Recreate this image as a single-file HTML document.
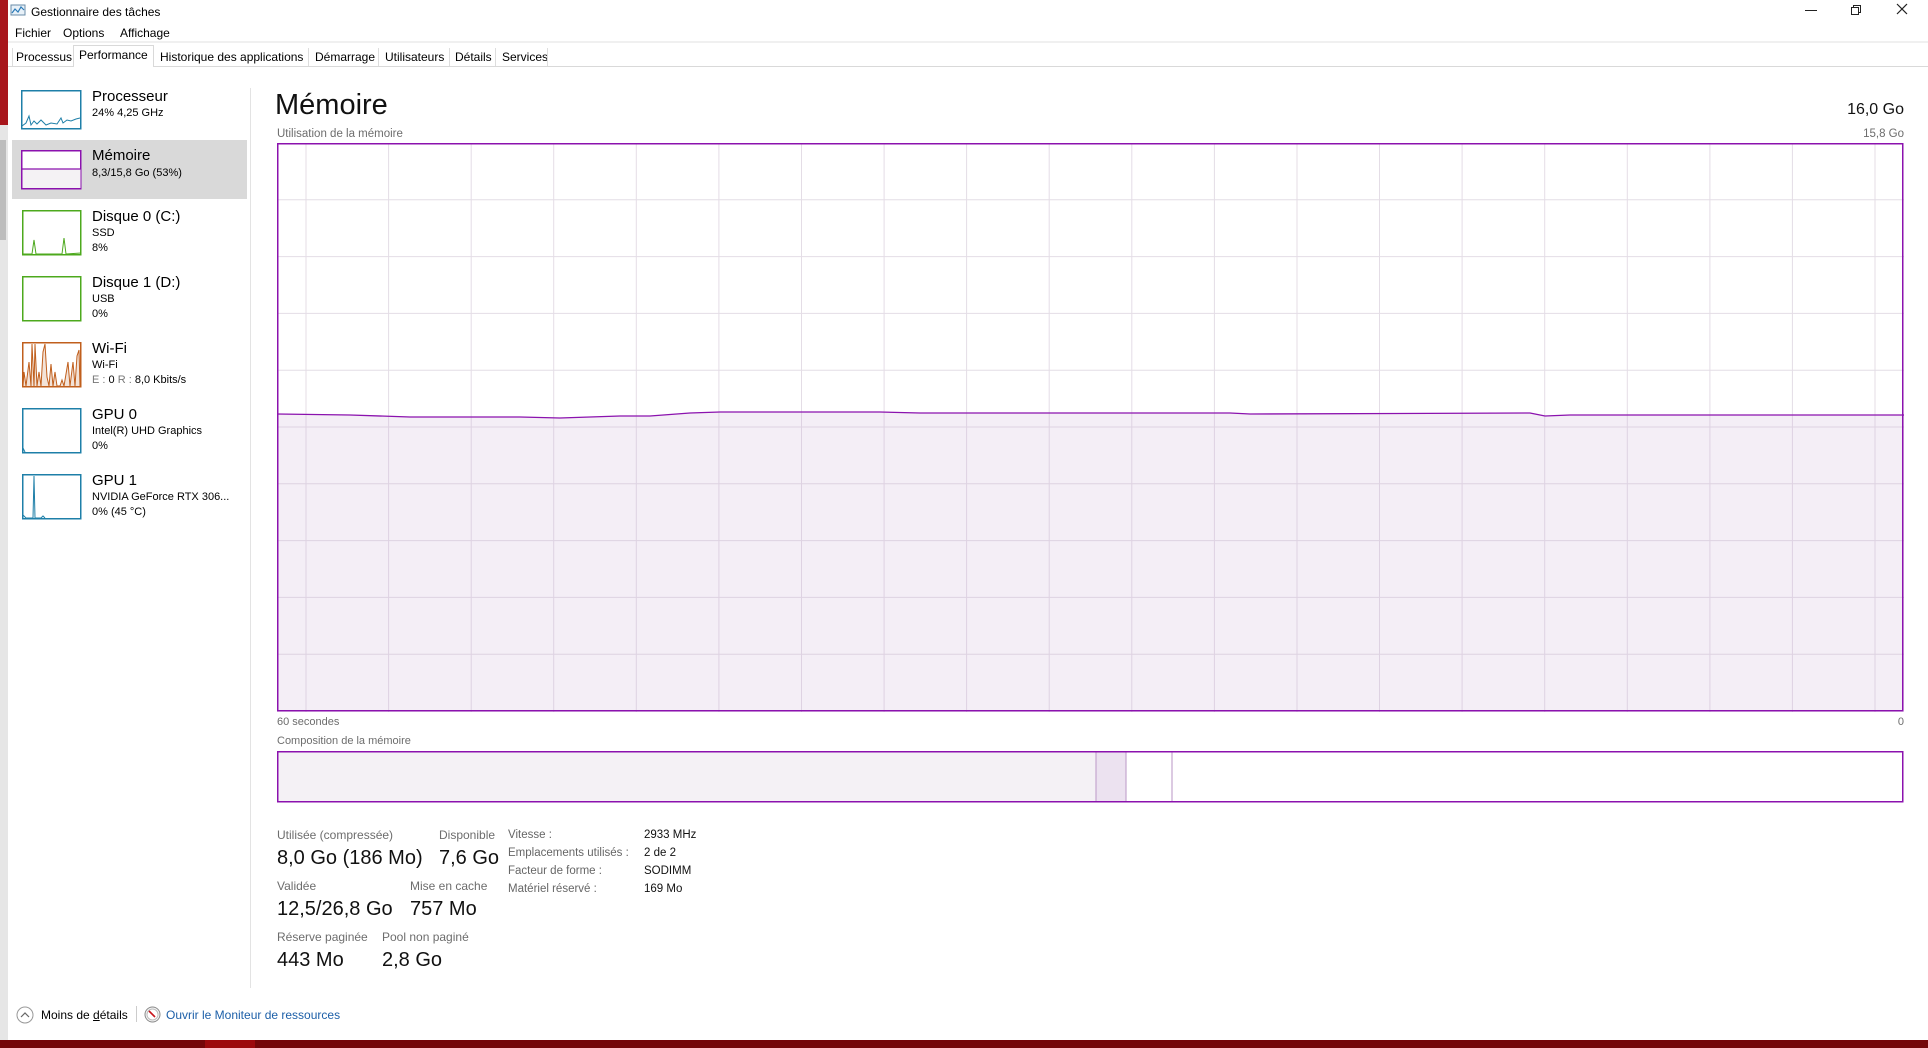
<!DOCTYPE html>
<html><head><meta charset="utf-8"><style>
*{margin:0;padding:0;box-sizing:border-box}
body{width:1928px;height:1048px;overflow:hidden;background:#fff;font-family:"Liberation Sans","DejaVu Sans",sans-serif;color:#000;position:relative}
.a{position:absolute;white-space:nowrap}
.t{font-size:15px}
.s{font-size:11px}
.tab{font-size:12px;top:50px}
.sep{top:48px;height:18px;width:1px;background:#ddd}
.lbl{font-size:12px;color:#6d6d6d}
.val{font-size:20px;color:#111}
.r{font-size:11.5px;color:#666}
.rv{font-size:11.5px;color:#111}
</style></head><body>
<div class="a" style="left:0;top:0;width:8px;height:125px;background:#a8161c"></div>
<div class="a" style="left:0;top:125px;width:8px;height:915px;background:#e6e6e6"></div>
<div class="a" style="left:0;top:140px;width:6px;height:100px;background:#bdbdbd"></div>
<div class="a" style="left:0;top:1040px;width:1928px;height:8px;background:#74070a"></div>
<div class="a" style="left:205px;top:1040px;width:50px;height:8px;background:#9c0a0e"></div>
<svg class="a" style="left:10px;top:4px" width="16" height="14"><rect x="1" y="1" width="14" height="10" fill="#e8f1f8" stroke="#6a8ca8"/><polyline points="2,9 5,5 8,8 11,3 14,6" fill="none" stroke="#2a7ab8" stroke-width="1.2"/></svg>
<div class="a" style="left:31px;top:5px;font-size:12px">Gestionnaire des tâches</div>
<div class="a" style="left:1805px;top:10px;width:12px;height:1px;background:#222"></div>
<svg class="a" style="left:1850px;top:4px" width="14" height="12"><rect x="1.5" y="3.5" width="7" height="7" fill="none" stroke="#222"/><path d="M3.5 3.5V1.5H10.5V8.5H8.5" fill="none" stroke="#222"/></svg>
<svg class="a" style="left:1896px;top:3px" width="12" height="12"><path d="M1 1L11 11M11 1L1 11" stroke="#222" stroke-width="1.2"/></svg>
<div class="a" style="left:15px;top:26px;font-size:12px">Fichier</div>
<div class="a" style="left:63px;top:26px;font-size:12px">Options</div>
<div class="a" style="left:120px;top:26px;font-size:12px">Affichage</div>
<div class="a" style="left:8px;top:41px;width:1920px;height:2px;background:#f0f0f0"></div>
<div class="a" style="left:8px;top:66px;width:1920px;height:1px;background:#d9d9d9"></div>
<div class="a sep" style="left:12px"></div>
<div class="a tab" style="left:16px">Processus</div>
<div class="a" style="left:73px;top:45px;width:81px;height:22px;border:1px solid #d9d9d9;border-bottom:none;background:#fff"></div>
<div class="a tab" style="left:79px;top:48px">Performance</div>
<div class="a tab" style="left:160px">Historique des applications</div>
<div class="a sep" style="left:308px"></div>
<div class="a tab" style="left:315px">Démarrage</div>
<div class="a sep" style="left:378px"></div>
<div class="a tab" style="left:385px">Utilisateurs</div>
<div class="a sep" style="left:449px"></div>
<div class="a tab" style="left:455px">Détails</div>
<div class="a sep" style="left:495px"></div>
<div class="a tab" style="left:502px">Services</div>
<div class="a sep" style="left:547px"></div>

<!-- sidebar -->
<div class="a" style="left:250px;top:88px;width:1px;height:900px;background:#e3e3e3"></div>
<div class="a" style="left:12px;top:140px;width:235px;height:59px;background:#d9d9d9"></div>
<svg class="a" style="left:21px;top:90px" width="62" height="41"><rect x="0.75" y="0.75" width="59" height="38" fill="#fff" stroke="#1e7fa8" stroke-width="1.5"/><polyline points="1,36 5,33 8,26 10,35 13,31 16,34 20,30 25,35 30,33 36,34 40,28 42,33 46,30 50,31 55,29 59,28" fill="none" stroke="#1e7fa8"/></svg>
<div class="a t" style="left:92px;top:88px">Processeur</div>
<div class="a s" style="left:92px;top:107px">24% 4,25 GHz</div>
<svg class="a" style="left:21px;top:150px" width="62" height="41"><rect x="0.75" y="0.75" width="59" height="38" fill="#fff" stroke="#8b12ae" stroke-width="1.5"/><rect x="1.5" y="19" width="58" height="19" fill="#f4f2f4"/><line x1="1" y1="19" x2="60" y2="19" stroke="#8b12ae" stroke-width="1.2"/></svg>
<div class="a t" style="left:92px;top:147px">Mémoire</div>
<div class="a s" style="left:92px;top:167px">8,3/15,8 Go (53%)</div>
<svg class="a" style="left:22px;top:210px" width="61" height="46"><rect x="0.75" y="0.75" width="58" height="44" fill="#fff" stroke="#4da91d" stroke-width="1.5"/><polyline points="1,44 10,44 12,30 14,44 40,44 42,28 44,44 59,43" fill="none" stroke="#4da91d"/></svg>
<div class="a t" style="left:92px;top:208px">Disque 0 (C:)</div>
<div class="a s" style="left:92px;top:227px">SSD</div>
<div class="a s" style="left:92px;top:242px">8%</div>
<svg class="a" style="left:22px;top:276px" width="61" height="46"><rect x="0.75" y="0.75" width="58" height="44" fill="#fff" stroke="#4da91d" stroke-width="1.5"/></svg>
<div class="a t" style="left:92px;top:274px">Disque 1 (D:)</div>
<div class="a s" style="left:92px;top:293px">USB</div>
<div class="a s" style="left:92px;top:308px">0%</div>
<svg class="a" style="left:22px;top:342px" width="61" height="46"><rect x="0.75" y="0.75" width="58" height="44" fill="#fff" stroke="#c05f1d" stroke-width="1.5"/><polyline points="1,44 2,30 4,44 7,20 9,44 10,2 12,44 13,2 15,44 17,30 19,44 21,10 23,2 25,35 27,44 29,22 31,44 33,30 35,44 38,44 40,38 42,44 46,20 48,44 51,20 53,44 55,14 57,8 58,44" fill="#f3e3d8" stroke="#c05f1d"/></svg>
<div class="a t" style="left:92px;top:340px">Wi-Fi</div>
<div class="a s" style="left:92px;top:359px">Wi-Fi</div>
<div class="a s" style="left:92px;top:374px"><span style="color:#777">E : </span>0 <span style="color:#777">R : </span>8,0 Kbits/s</div>
<svg class="a" style="left:22px;top:408px" width="61" height="46"><rect x="0.75" y="0.75" width="58" height="44" fill="#fff" stroke="#1e7fa8" stroke-width="1.5"/><polyline points="1,40 3,44" stroke="#1e7fa8" fill="none"/></svg>
<div class="a t" style="left:92px;top:406px">GPU 0</div>
<div class="a s" style="left:92px;top:425px">Intel(R) UHD Graphics</div>
<div class="a s" style="left:92px;top:440px">0%</div>
<svg class="a" style="left:22px;top:474px" width="61" height="46"><rect x="0.75" y="0.75" width="58" height="44" fill="#fff" stroke="#1e7fa8" stroke-width="1.5"/><polyline points="1,41 4,44 11,44 12,2 13,44 19,44 21,42 23,44" stroke="#1e7fa8" fill="none"/></svg>
<div class="a t" style="left:92px;top:472px">GPU 1</div>
<div class="a s" style="left:92px;top:491px">NVIDIA GeForce RTX 306...</div>
<div class="a s" style="left:92px;top:506px">0% (45 °C)</div>

<!-- main -->
<div class="a" style="left:275px;top:89px;font-size:29px;color:#111">Mémoire</div>
<div class="a" style="right:24px;top:101px;font-size:16px;color:#111">16,0 Go</div>
<div class="a lbl" style="left:277px;top:128px;font-size:11.5px">Utilisation de la mémoire</div>
<div class="a lbl" style="right:24px;top:128px;font-size:11.5px">15,8 Go</div>
<svg class="a" style="left:277px;top:143px" width="1627" height="569">
<g stroke="#e4dde6" stroke-width="1">
<path d="M29 0V569M111.6 0V569M194.2 0V569M276.7 0V569M359.3 0V569M441.9 0V569M524.5 0V569M607.1 0V569M689.6 0V569M772.2 0V569M854.8 0V569M937.4 0V569M1020 0V569M1102.5 0V569M1185.1 0V569M1267.7 0V569M1350.3 0V569M1432.9 0V569M1515.4 0V569M1598 0V569"/>
<path d="M0 56.8H1627M0 113.6H1627M0 170.4H1627M0 227.2H1627M0 284H1627M0 340.8H1627M0 397.6H1627M0 454.4H1627M0 511.2H1627"/>
</g>
<polygon points="0,271 73,272 133,274 243,274 283,275 343,273 373,273 413,270 443,269 503,269 603,269 643,270 723,270 953,270 973,271 1253,270 1268,273 1293,272 1627,272 1627,569 0,569" fill="#c8a8d4" fill-opacity="0.2"/>
<polyline points="0,271 73,272 133,274 243,274 283,275 343,273 373,273 413,270 443,269 503,269 603,269 643,270 723,270 953,270 973,271 1253,270 1268,273 1293,272 1627,272" fill="none" stroke="#8b12ae" stroke-width="1.3"/>
<rect x="0.75" y="0.75" width="1625" height="567" fill="none" stroke="#8b12ae" stroke-width="1.5"/>
</svg>
<div class="a lbl" style="left:277px;top:716px;font-size:11px">60 secondes</div>
<div class="a lbl" style="right:24px;top:716px;font-size:11px">0</div>
<div class="a lbl" style="left:277px;top:735px;font-size:11px">Composition de la mémoire</div>
<svg class="a" style="left:277px;top:751px" width="1627" height="52">
<rect x="1" y="1" width="818" height="50" fill="#f4f1f5"/>
<rect x="819" y="1" width="30" height="50" fill="#ece2f0"/>
<path d="M819 1V51M849 1V51M895 1V51" stroke="#c5a6cf" stroke-width="1.2"/>
<rect x="0.75" y="0.75" width="1625" height="50" fill="none" stroke="#8b12ae" stroke-width="1.5"/>
</svg>

<div class="a lbl" style="left:277px;top:828px">Utilisée (compressée)</div>
<div class="a lbl" style="left:439px;top:828px">Disponible</div>
<div class="a val" style="left:277px;top:847px">8,0 Go (186 Mo)</div>
<div class="a val" style="left:439px;top:847px">7,6 Go</div>
<div class="a lbl" style="left:277px;top:879px">Validée</div>
<div class="a lbl" style="left:410px;top:879px">Mise en cache</div>
<div class="a val" style="left:277px;top:898px">12,5/26,8 Go</div>
<div class="a val" style="left:410px;top:898px">757 Mo</div>
<div class="a lbl" style="left:277px;top:930px">Réserve paginée</div>
<div class="a lbl" style="left:382px;top:930px">Pool non paginé</div>
<div class="a val" style="left:277px;top:949px">443 Mo</div>
<div class="a val" style="left:382px;top:949px">2,8 Go</div>

<div class="a r" style="left:508px;top:829px">Vitesse :</div>
<div class="a rv" style="left:644px;top:829px">2933 MHz</div>
<div class="a r" style="left:508px;top:847px">Emplacements utilisés :</div>
<div class="a rv" style="left:644px;top:847px">2 de 2</div>
<div class="a r" style="left:508px;top:865px">Facteur de forme :</div>
<div class="a rv" style="left:644px;top:865px">SODIMM</div>
<div class="a r" style="left:508px;top:883px">Matériel réservé :</div>
<div class="a rv" style="left:644px;top:883px">169 Mo</div>

<!-- footer -->
<svg class="a" style="left:16px;top:1006px" width="18" height="18"><circle cx="9" cy="9" r="8" fill="none" stroke="#999"/><path d="M5 11L9 7L13 11" fill="none" stroke="#666" stroke-width="1.2"/></svg>
<div class="a" style="left:41px;top:1008px;font-size:12px">Moins de <u>d</u>étails</div>
<div class="a" style="left:136px;top:1006px;width:1px;height:16px;background:#ccc"></div>
<svg class="a" style="left:144px;top:1006px" width="17" height="17"><circle cx="8.5" cy="8.5" r="7.5" fill="#f6f6f6" stroke="#888"/><circle cx="8.5" cy="8.5" r="5.5" fill="#fff" stroke="#bbb"/><path d="M5 5L11 11" stroke="#c8141c" stroke-width="1.6"/></svg>
<div class="a" style="left:166px;top:1008px;font-size:12px;color:#1c5fa8">Ouvrir le Moniteur de ressources</div>
</body></html>
